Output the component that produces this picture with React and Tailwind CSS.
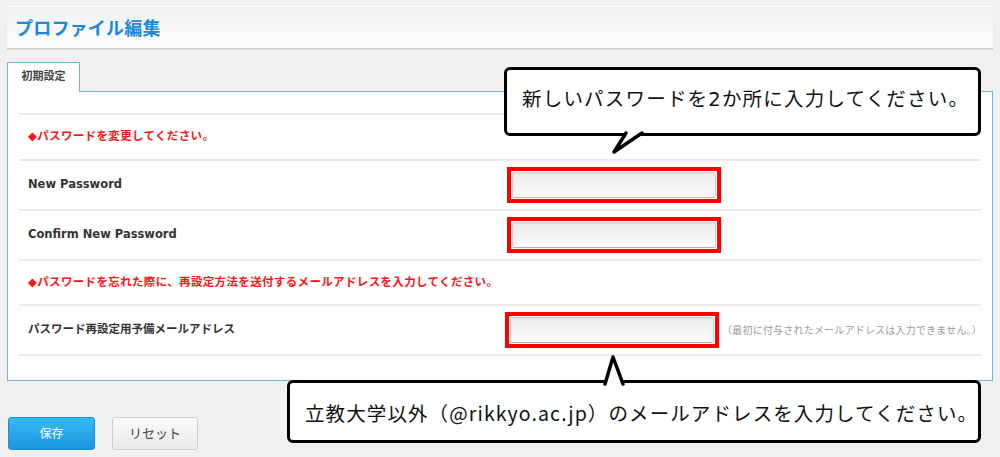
import React from 'react';

const FONT = "font-['DejaVu_Sans','Noto_Sans_CJK_JP',sans-serif]";

const Field = () => (
  <div className="border-4 border-[#ff0000] p-px">
    <div className="w-[204px] h-[26px] rounded-[2px] border border-[#d2d2d2] border-b-[#b5b5b5] bg-linear-to-b from-[#ececec] to-[#fafafa] shadow-[inset_0_1px_2px_rgba(0,0,0,0.06)]" />
  </div>
);

const Notice = ({ children, h }) => (
  <div className={`flex items-center pl-[9px] border-b-2 border-[#ebebeb] ${h}`}>
    <p className="text-[11.5px] font-bold text-[#ff1414] tracking-[0.35px]">◆{children}</p>
  </div>
);

const Row = ({ label, note }) => (
  <div className="flex items-center h-[50px] pl-[9px] border-b-2 border-[#ebebeb]">
    <div className="w-[479px] text-[11.5px] font-bold text-[#333]">{label}</div>
    <Field />
    {note && <span className="ml-[3px] text-[10px] text-[#9a9a9a] tracking-[0.2px]">{note}</span>}
  </div>
);

export default function App() {
  return (
    <div className={`${FONT} relative w-[1000px] h-[457px] overflow-hidden bg-[#f0f0f0] pt-[6px]`}>
      {/* page header */}
      <div className="mx-[7px] h-[43px] flex items-center pl-[8px] pt-[2px] border-t border-white border-b border-b-[#c8c8c8] bg-linear-to-b from-[#f0f0f0] to-[#fcfcfc] shadow-[0_1px_1px_rgba(0,0,0,0.06)]">
        <h1 className="text-[18px] font-bold text-[#1b8ad6] tracking-[0.2px]">プロファイル編集</h1>
      </div>

      {/* tab */}
      <div className="mt-[13px] ml-[7px] relative z-10 -mb-px w-[73px] h-[30px] flex items-center justify-center border border-b-0 border-[#6fb5e0] bg-white">
        <span className="text-[11px] font-bold text-[#444]">初期設定</span>
      </div>

      {/* form panel */}
      <div className="mx-[7px] border border-[#6fb5e0] bg-white pt-[21px] pb-[24px] px-[11px]">
        <div className="border-t-2 border-[#ebebeb]">
          <Notice h="h-[46px]">パスワードを変更してください。</Notice>
          <Row label="New Password" />
          <Row label="Confirm New Password" />
          <Notice h="h-[45px]">パスワードを忘れた際に、再設定方法を送付するメールアドレスを入力してください。</Notice>
          <Row label="パスワード再設定用予備メールアドレス" note="（最初に付与されたメールアドレスは入力できません。）" />
        </div>
      </div>

      {/* actions */}
      <div className="flex gap-[17px] ml-[8px] mt-[36px]">
        <button className="w-[87px] h-[33px] rounded-[3px] border border-[#1e8fd6] bg-linear-to-b from-[#36bbf6] to-[#1a94df] text-white text-[12px]">
          保存
        </button>
        <button className="w-[86px] h-[33px] rounded-[3px] border border-[#cfcfcf] bg-linear-to-b from-[#fafafa] to-[#e9e9e9] text-[#444] text-[13px]">
          リセット
        </button>
      </div>

      {/* speech bubble: password */}
      <div className="absolute left-[504px] top-[67px] w-[477px] h-[69px] rounded-[6px] border-[3.5px] border-black bg-white flex items-center pl-[15px] pb-[3px]">
        <span className="whitespace-nowrap text-[19.5px] text-[#111] tracking-[1.2px]">新しいパスワードを2か所に入力してください。</span>
        <svg className="absolute left-[96px] top-[56px]" width="50" height="35" viewBox="0 0 50 35">
          <polygon points="23,2 23,7 11,26 39,7 39,2" fill="white" />
          <polyline points="23,7 11,26 39,7" fill="none" stroke="black" strokeWidth="3.5" strokeLinejoin="round" strokeLinecap="round" />
        </svg>
      </div>

      {/* speech bubble: backup address */}
      <div className="absolute left-[287px] top-[380px] w-[694px] h-[63px] rounded-[6px] border-[3.5px] border-black bg-white flex items-center pl-[15px] pt-[2px]">
        <span className="whitespace-nowrap font-['Noto_Sans_CJK_JP',sans-serif] text-[19.5px] text-[#111] tracking-[1.1px]">立教大学以外（@rikkyo.ac.jp）のメールアドレスを入力してください。</span>
        <svg className="absolute left-[306.5px] top-[-33.5px]" width="35" height="40" viewBox="0 0 35 40">
          <polygon points="8,38 8,34 16,7 26,34 26,38" fill="white" />
          <polyline points="8,34 16,7 26,34" fill="none" stroke="black" strokeWidth="3.5" strokeLinejoin="round" strokeLinecap="round" />
        </svg>
      </div>
    </div>
  );
}
